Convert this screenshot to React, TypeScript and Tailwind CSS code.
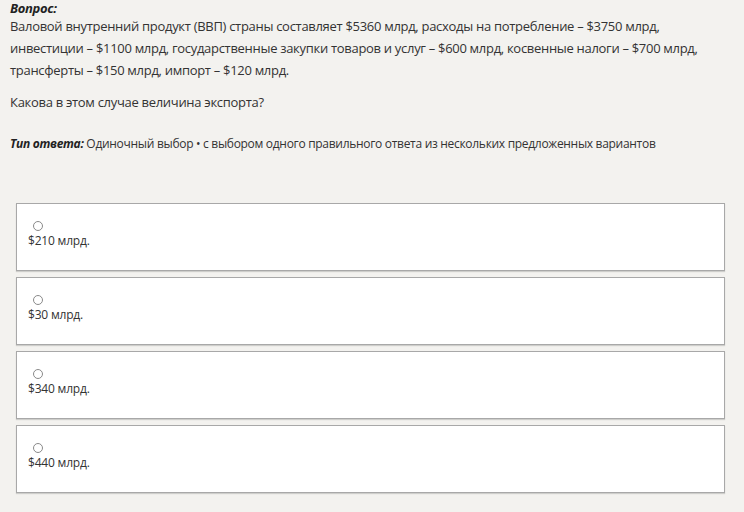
import React from 'react';

const options = ['$210 млрд.', '$30 млрд.', '$340 млрд.', '$440 млрд.'];

export default function App() {
  return (
    <div className="w-[744px] h-[512px] overflow-hidden bg-[#f3f2ef] text-[#333] font-['Open_Sans',sans-serif]">
      <div className="pl-[10px] pt-[1px]">
        <div className="text-[13px] leading-[14px] font-bold italic text-[#222] tracking-[-0.3px]">Вопрос:</div>
        <p className="text-[13px] leading-[22px] tracking-[-0.3px] whitespace-nowrap">
          Валовой внутренний продукт (ВВП) страны составляет $5360 млрд, расходы на потребление – $3750 млрд,
          <br />
          инвестиции – $1100 млрд, государственные закупки товаров и услуг – $600 млрд, косвенные налоги – $700 млрд,
          <br />
          трансферты – $150 млрд, импорт – $120 млрд.
        </p>
        <p className="text-[13px] leading-[22px] mt-[10px] tracking-[-0.3px]">Какова в этом случае величина экспорта?</p>
        <p className="text-[12px] leading-[18px] mt-[22px] tracking-[-0.3px] whitespace-nowrap">
          <span className="font-bold italic text-[#222]">Тип ответа:</span> Одиночный выбор • с выбором одного правильного ответа из нескольких предложенных вариантов
        </p>
      </div>
      <div className="mt-[50px] ml-[16px] w-[709px] flex flex-col gap-[6px]">
        {options.map(o => (
          <label key={o} className="h-[68px] bg-white border border-[#a8a8a8] shadow-[0_1px_1px_rgba(0,0,0,0.15)] pl-[11px] pt-[17px] block">
            <span className="block w-[10px] h-[10px] rounded-full border border-[#8a8a8a] ml-[5px]" />
            <span className="block text-[12px] leading-[16px] mt-[2px] text-[#333] tracking-[-0.2px]">{o}</span>
          </label>
        ))}
      </div>
    </div>
  );
}
